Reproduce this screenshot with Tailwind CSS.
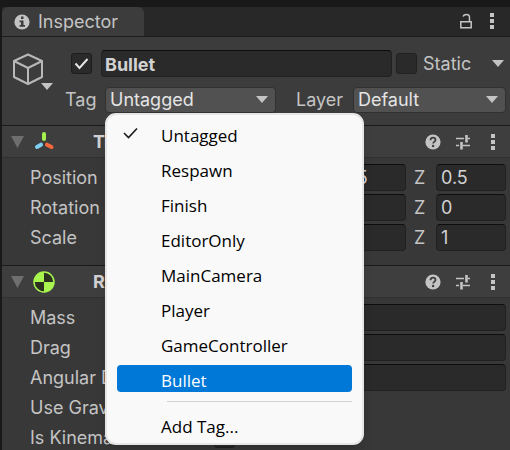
<!DOCTYPE html>
<html lang="en">
<head>
  <meta charset="UTF-8" />
  <meta name="viewport" content="width=device-width, initial-scale=1.0"/>
  <title>Inspector</title>
  <script src="https://cdn.jsdelivr.net/npm/@tailwindcss/browser@4"></script>
</head>
<body class="bg-[#383838] font-['Inter',sans-serif] text-lg leading-6 text-[#c4c4c4] overflow-hidden">
  <!-- shared icons -->
  <svg class="hidden">
    <symbol id="dots" viewBox="0 0 4 16">
      <path d="M0 0h4v4H0zM0 6h4v4H0zM0 12h4v4H0z" fill="#c4c4c4"/>
    </symbol>
    <symbol id="caret" viewBox="0 0 12 7">
      <path d="M0 0h12L6 7z" fill="#c4c4c4"/>
    </symbol>
    <symbol id="foldout" viewBox="0 0 13 12">
      <path d="M0 0h13L6.500 12z" fill="#6e6e6e"/>
    </symbol>
    <symbol id="help" viewBox="0 0 16 16">
      <circle cx="8" cy="8" r="7.600" fill="#c4c4c4"/>
      <path d="M5.500 6.200C5.500 4.400 6.600 3.600 8 3.600s2.500.9 2.500 2.300c0 1.700-2.300 1.700-2.300 3.600" fill="none" stroke="#3e3e3e" stroke-width="1.800"/>
      <circle cx="8.100" cy="12" r="1.200" fill="#3e3e3e"/>
    </symbol>
    <symbol id="sliders" viewBox="0 0 16 16">
      <path d="M1 4.500h8M13 4.500h2M1 11.500h3M8 11.500h7" stroke="#c4c4c4" stroke-width="1.500"/>
      <path d="M11.500 1v7.500M6.500 8v7.500" stroke="#c4c4c4" stroke-width="2.600"/>
    </symbol>
  </svg>

  <div class="min-h-screen border-l-2 border-[#191919]">
    <!-- tab bar -->
    <header class="flex h-[37px] items-stretch border-t-[7px] border-b border-t-[#191919] border-b-[#1c1c1c] bg-[#282828]">
      <h1 class="flex w-[142px] items-center gap-2 rounded-t-md bg-[#3c3c3c] pt-px pl-3">
        <svg class="size-4" viewBox="0 0 16 16">
          <circle cx="8" cy="8" r="7.600" fill="#c4c4c4"/>
          <path d="M7 2.500h2.500V5H7zM5.500 6.500h4V11H11v1.800H5.500V11H7V8.200H5.500z" fill="#3c3c3c"/>
        </svg>
        Inspector
      </h1>
      <div class="ml-auto flex items-center gap-[18px] pr-4 pb-[2px]">
        <button aria-label="Lock">
          <svg class="h-4 w-3" viewBox="0 0 12 16" fill="none" stroke="#c4c4c4" stroke-width="1.500">
            <path d="M.8 8.800h10.400v6H.8zM9.500 8.500V4.500C9.500 2.300 8.200 1.500 6.500 1.500S3.500 2.200 3 3.500"/>
          </svg>
        </button>
        <button aria-label="Menu"><svg class="h-4 w-1"><use href="#dots"/></svg></button>
      </div>
    </header>

    <!-- game object -->
    <section class="flex h-[88px] bg-[#3c3c3c] pt-[13px] pr-1">
      <button aria-label="Icon" class="relative ml-[10px] h-10 w-[41px] shrink-0">
        <svg class="block h-9 w-8" viewBox="0 0 32 36" fill="none" stroke="#b8b8b8" stroke-width="2" stroke-linejoin="round">
          <path d="M16 3.500L30 10v16L16 33 2 26V10zM2 10l14 7 14-7M16 17v16" transform="translate(0 -1)"/>
        </svg>
        <svg class="absolute right-0 bottom-0 h-[7px] w-3"><use href="#caret"/></svg>
      </button>
      <div class="flex min-w-0 flex-1 flex-col gap-[10px] pl-[11px]">
        <div class="flex h-[27px] items-center pl-[7px]">
          <span class="relative size-[21px] shrink-0">
            <input type="checkbox" checked aria-label="Active" class="block size-full appearance-none rounded-[3px] border border-[#1c1c1c] bg-[#2a2a2a]"/>
            <svg class="pointer-events-none absolute inset-0 size-full" viewBox="0 0 21 21"><path d="M4.500 10.500l4 4.500L16.500 6" fill="none" stroke="#e4e4e4" stroke-width="2"/></svg>
          </span>
          <input type="text" value="Bullet" aria-label="Name" class="ml-[9px] h-full min-w-0 flex-1 rounded border border-[#212121] border-t-[#0d0d0d] bg-[#2a2a2a] px-[3px] pt-[2px] font-bold text-[#d2d2d2]"/>
          <input type="checkbox" id="static" class="ml-1 size-[21px] appearance-none rounded-[3px] border border-[#212121] bg-[#2a2a2a]"/>
          <label for="static" class="ml-[6px] w-[69px]">Static</label>
          <button aria-label="Static flags" class="pr-[2px]"><svg class="h-[7px] w-3"><use href="#caret"/></svg></button>
        </div>
        <div class="flex h-[26px] items-center">
          <label for="tag" class="w-[41px] pl-px">Tag</label>
          <div class="relative h-full w-[171px]">
            <select id="tag" class="size-full appearance-none rounded border border-[#303030] bg-[#515151] px-1 text-[#e4e4e4]">
              <option>Untagged</option>
            </select>
            <svg class="pointer-events-none absolute top-[9px] right-2 h-[7px] w-3"><use href="#caret"/></svg>
            <!-- open tag menu -->
            <ul role="menu" class="absolute top-full left-0 z-10 flex h-[332px] w-[259px] flex-col rounded-[11px] border-2 border-[#e6e6e6] bg-[#f9f9f9] px-[10px] pt-[2px] font-['Open_Sans','Noto_Sans',sans-serif] text-[17px] text-black shadow-lg">
              <li class="h-[35px] pt-[5px]">
                <button role="menuitem" class="flex h-7 w-full items-center">
                  <svg class="mr-[23px] mb-[6px] ml-[6px] h-3 w-[15px]" viewBox="0 0 15 12"><path d="M1 6l4.500 4.500L14 1.500" fill="none" stroke="#1a1a1a" stroke-width="1.600"/></svg>
                  Untagged
                </button>
              </li>
              <li class="h-[35px] pt-[5px]"><button role="menuitem" class="h-7 w-full pl-11 text-left">Respawn</button></li>
              <li class="h-[35px] pt-[5px]"><button role="menuitem" class="h-7 w-full pl-11 text-left">Finish</button></li>
              <li class="h-[35px] pt-[5px]"><button role="menuitem" class="h-7 w-full pl-11 text-left">EditorOnly</button></li>
              <li class="h-[35px] pt-[5px]"><button role="menuitem" class="h-7 w-full pl-11 text-left">MainCamera</button></li>
              <li class="h-[35px] pt-[5px]"><button role="menuitem" class="h-7 w-full pl-11 text-left">Player</button></li>
              <li class="h-[35px] pt-[5px]"><button role="menuitem" class="h-7 w-full pl-11 text-left">GameController</button></li>
              <li class="h-[35px] pt-[3px]"><button role="menuitem" class="h-[27px] w-full rounded bg-[#0078d7] pt-1 pl-11 text-left text-white">Bullet</button></li>
              <li role="separator" class="mt-1 ml-[50px] border-t border-[#d4d4d4]"></li>
              <li class="pt-[11px]"><button role="menuitem" class="h-7 w-full pl-11 text-left">Add Tag...</button></li>
            </ul>
          </div>
          <label for="layer" class="ml-5 w-[57px]">Layer</label>
          <div class="relative h-full min-w-0 flex-1">
            <select id="layer" class="size-full appearance-none rounded border border-[#303030] bg-[#515151] px-1 text-[#e4e4e4]">
              <option>Default</option>
            </select>
            <svg class="pointer-events-none absolute top-[9px] right-2 h-[7px] w-3"><use href="#caret"/></svg>
          </div>
        </div>
      </div>
    </section>

    <!-- transform -->
    <section>
      <h2 class="flex h-[33px] items-center border-t border-b border-t-[#1a1a1a] border-b-[#303030] bg-[#3e3e3e] pr-[15px] pl-[9px] font-bold text-[#d2d2d2]">
        <svg class="h-3 w-[13px]"><use href="#foldout"/></svg>
        <svg class="ml-2 size-6" viewBox="0 0 24 24" fill="none" stroke-width="4" stroke-linecap="round">
          <path d="M12 4v5" stroke="#a5f04f"/>
          <path d="M9 14.700L5 17" stroke="#7fd0f5"/>
          <path d="M15 14.700l4.500 2.300" stroke="#f7683c"/>
        </svg>
        <span class="ml-[37px]">Transform</span>
        <button aria-label="Help" class="ml-auto"><svg class="size-4"><use href="#help"/></svg></button>
        <button aria-label="Presets" class="ml-[14px]"><svg class="size-4"><use href="#sliders"/></svg></button>
        <button aria-label="Options" class="ml-5"><svg class="h-4 w-1"><use href="#dots"/></svg></button>
      </h2>
      <div class="flex flex-col gap-[3px] pt-[6px] pr-1 pb-[14px] pl-7">
        <div class="flex h-[27px] items-center">
          <span class="w-46 shrink-0 pt-px">Position</span>
          <div class="grid h-full flex-1 grid-cols-3 gap-2">
            <label class="flex items-center"><span class="w-[22px] shrink-0">X</span><input type="text" value="0" class="h-full w-full min-w-0 rounded border border-[#212121] border-t-[#0d0d0d] bg-[#2a2a2a] px-1 text-[#d2d2d2]"/></label>
            <label class="flex items-center"><span class="w-[22px] shrink-0">Y</span><input type="text" value="0.5" class="h-full w-full min-w-0 rounded border border-[#212121] border-t-[#0d0d0d] bg-[#2a2a2a] px-1 text-[#d2d2d2]"/></label>
            <label class="flex items-center"><span class="w-[22px] shrink-0">Z</span><input type="text" value="0.5" class="h-full w-full min-w-0 rounded border border-[#212121] border-t-[#0d0d0d] bg-[#2a2a2a] px-1 text-[#d2d2d2]"/></label>
          </div>
        </div>
        <div class="flex h-[27px] items-center">
          <span class="w-46 shrink-0 pt-px">Rotation</span>
          <div class="grid h-full flex-1 grid-cols-3 gap-2">
            <label class="flex items-center"><span class="w-[22px] shrink-0">X</span><input type="text" value="0" class="h-full w-full min-w-0 rounded border border-[#212121] border-t-[#0d0d0d] bg-[#2a2a2a] px-1 text-[#d2d2d2]"/></label>
            <label class="flex items-center"><span class="w-[22px] shrink-0">Y</span><input type="text" value="0" class="h-full w-full min-w-0 rounded border border-[#212121] border-t-[#0d0d0d] bg-[#2a2a2a] px-1 text-[#d2d2d2]"/></label>
            <label class="flex items-center"><span class="w-[22px] shrink-0">Z</span><input type="text" value="0" class="h-full w-full min-w-0 rounded border border-[#212121] border-t-[#0d0d0d] bg-[#2a2a2a] px-1 text-[#d2d2d2]"/></label>
          </div>
        </div>
        <div class="flex h-[27px] items-center">
          <span class="w-46 shrink-0 pt-px">Scale</span>
          <div class="grid h-full flex-1 grid-cols-3 gap-2">
            <label class="flex items-center"><span class="w-[22px] shrink-0">X</span><input type="text" value="1" class="h-full w-full min-w-0 rounded border border-[#212121] border-t-[#0d0d0d] bg-[#2a2a2a] px-1 text-[#d2d2d2]"/></label>
            <label class="flex items-center"><span class="w-[22px] shrink-0">Y</span><input type="text" value="1" class="h-full w-full min-w-0 rounded border border-[#212121] border-t-[#0d0d0d] bg-[#2a2a2a] px-1 text-[#d2d2d2]"/></label>
            <label class="flex items-center"><span class="w-[22px] shrink-0">Z</span><input type="text" value="1" class="h-full w-full min-w-0 rounded border border-[#212121] border-t-[#0d0d0d] bg-[#2a2a2a] px-1 text-[#d2d2d2]"/></label>
          </div>
        </div>
      </div>
    </section>

    <!-- rigidbody -->
    <section>
      <h2 class="flex h-[33px] items-center border-t border-b border-t-[#1a1a1a] border-b-[#303030] bg-[#3e3e3e] pr-[15px] pl-[9px] font-bold text-[#d2d2d2]">
        <svg class="h-3 w-[13px]"><use href="#foldout"/></svg>
        <svg class="ml-2 size-6" viewBox="0 0 24 24">
          <circle cx="12" cy="12" r="10" fill="#2b3320" stroke="#a8f550" stroke-width="1.500"/>
          <path d="M12 12V2A10 10 0 0 0 2 12zM12 12v10a10 10 0 0 0 10-10z" fill="#a8f550"/>
        </svg>
        <span class="ml-[37px]">Rigidbody</span>
        <button aria-label="Help" class="ml-auto"><svg class="size-4"><use href="#help"/></svg></button>
        <button aria-label="Presets" class="ml-[14px]"><svg class="size-4"><use href="#sliders"/></svg></button>
        <button aria-label="Options" class="ml-5"><svg class="h-4 w-1"><use href="#dots"/></svg></button>
      </h2>
      <div class="flex flex-col gap-[3px] pt-[6px] pr-1 pl-7">
        <div class="flex h-[27px] items-center">
          <label for="mass" class="w-46 shrink-0 pt-px">Mass</label>
          <input id="mass" type="text" class="h-full min-w-0 flex-1 rounded border border-[#212121] border-t-[#0d0d0d] bg-[#2a2a2a] px-1"/>
        </div>
        <div class="flex h-[27px] items-center">
          <label for="drag" class="w-46 shrink-0 pt-px">Drag</label>
          <input id="drag" type="text" class="h-full min-w-0 flex-1 rounded border border-[#212121] border-t-[#0d0d0d] bg-[#2a2a2a] px-1"/>
        </div>
        <div class="flex h-[27px] items-center">
          <label for="angular" class="w-46 shrink-0 pt-px">Angular Drag</label>
          <input id="angular" type="text" class="h-full min-w-0 flex-1 rounded border border-[#212121] border-t-[#0d0d0d] bg-[#2a2a2a] px-1"/>
        </div>
        <div class="flex h-[27px] items-center">
          <label for="gravity" class="w-46 shrink-0 pt-px">Use Gravity</label>
          <input id="gravity" type="checkbox" class="size-[21px] appearance-none rounded-[3px] border border-[#212121] bg-[#2a2a2a]"/>
        </div>
        <div class="flex h-[27px] items-center">
          <label for="kinematic" class="w-46 shrink-0 pt-px">Is Kinematic</label>
          <input id="kinematic" type="checkbox" class="size-[21px] appearance-none rounded-[3px] border border-[#212121] bg-[#2a2a2a]"/>
        </div>
      </div>
    </section>
  </div>
</body>
</html>
